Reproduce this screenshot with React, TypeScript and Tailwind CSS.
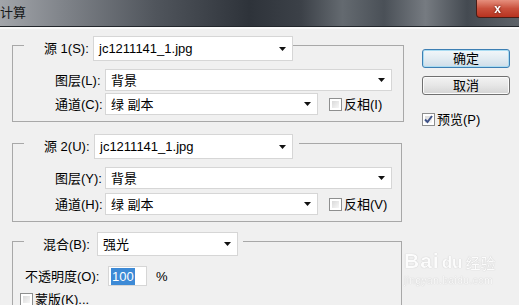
import React from 'react'

function Arrow() {
  return (
    <svg width="7" height="4" viewBox="0 0 7 4" className="shrink-0">
      <path d="M0 0 H7 L3.5 4 Z" fill="#111" />
    </svg>
  )
}

function Combo({ value, width, height = 22 }: { value: string; width: number; height?: number }) {
  return (
    <div
      className="flex items-center justify-between bg-white border border-[#d6d6d6] pl-[5px] pr-[6px] shrink-0"
      style={{ width, height }}
    >
      <span className="leading-none">{value}</span>
      <Arrow />
    </div>
  )
}

function Check({ checked = false }: { checked?: boolean }) {
  return (
    <span className="relative w-[13px] h-[13px] border border-[#8e8f8f] bg-white p-[2px] shrink-0 flex">
      <span className="flex-1 bg-gradient-to-br from-[#d9d9d9] to-[#f7f7f7]" />
      {checked && (
        <svg width="11" height="11" viewBox="0 0 11 11" className="absolute left-[0px] top-[0px]">
          <path d="M2 5.5 L4.5 8 L9 2" stroke="#3e5288" strokeWidth="2" fill="none" />
        </svg>
      )}
    </span>
  )
}

function Row({ label, children }: { label: string; children: React.ReactNode }) {
  return (
    <div className="flex items-center h-[22px]">
      <span className="w-[92px] pl-[42px] leading-none whitespace-nowrap">{label}</span>
      {children}
    </div>
  )
}

export default function App() {
  return (
    <div className="relative w-[519px] h-[305px] overflow-hidden bg-[#f0f0f0] text-[13px] text-black font-['Liberation_Sans','Noto_Sans_CJK_SC',sans-serif]">
      {/* Title bar */}
      <div className="flex justify-between items-start h-[27px] border-b border-[#22262b] bg-[linear-gradient(90deg,#a2a5aa_0%,#80848a_12%,#50555c_30%,#2e333a_48%,#3c4148_58%,#646a70_66%,#4a5057_74%,#767b81_82%,#444a51_90%,#5e6369_100%)]">
        <div className="h-full flex items-center text-[13px] text-[#161819] leading-none pb-[1px]">计算</div>
        <div className="mr-[-4px] w-[47px] h-[18px] rounded-bl-[4px] border border-t-0 border-[#4a1d16] bg-gradient-to-b from-[#e58f7d] via-[#c9503c] to-[#b8321f] flex items-center justify-center">
          <span className="text-white font-bold text-[12px] leading-none pr-[4px] drop-shadow-[0_0_1px_#5a1a10]">x</span>
        </div>
      </div>
      <div className="h-[2px] bg-[#fafafa]" />

      <div className="flex">
        {/* Left column */}
        <div className="ml-[12px] flex flex-col">
          <fieldset className="mt-[1px] w-[392px] border border-[#a8a8a8] px-0 pt-[8px] pb-[6px]">
            <legend className="ml-[11px] p-0">
              <div className="flex items-center pt-[6px]">
                <span className="w-[69px] pl-[20px] leading-none whitespace-nowrap">源 1(S):</span>
                <Combo value="jc1211141_1.jpg" width={200} height={25} />
              </div>
            </legend>
            <div className="flex flex-col gap-[2px]">
              <Row label="图层(L):">
                <Combo value="背景" width={287} />
              </Row>
              <Row label="通道(C):">
                <Combo value="绿 副本" width={213} />
                <span className="ml-[11px]"><Check /></span>
                <span className="ml-[2px] leading-none">反相(I)</span>
              </Row>
            </div>
          </fieldset>

          <fieldset className="mt-[6px] w-[390px] border border-[#a8a8a8] px-0 pt-[8px] pb-[6px]">
            <legend className="ml-[11px] p-0">
              <div className="flex items-center pt-[6px] pr-[6px]">
                <span className="w-[70px] pl-[20px] leading-none whitespace-nowrap">源 2(U):</span>
                <Combo value="jc1211141_1.jpg" width={199} height={25} />
              </div>
            </legend>
            <div className="flex flex-col gap-[4px]">
              <Row label="图层(Y):">
                <Combo value="背景" width={287} />
              </Row>
              <Row label="通道(H):">
                <Combo value="绿 副本" width={213} />
                <span className="ml-[11px]"><Check /></span>
                <span className="ml-[2px] leading-none">反相(V)</span>
              </Row>
            </div>
          </fieldset>

          <fieldset className="mt-[4px] w-[390px] border border-[#a8a8a8] px-0 pt-[10px] pb-[40px]">
            <legend className="ml-[11px] p-0">
              <div className="flex items-center pt-[6px] pr-[5px]">
                <span className="w-[73px] pl-[19px] leading-none whitespace-nowrap">混合(B):</span>
                <Combo value="强光" width={141} height={24} />
              </div>
            </legend>
            <div className="flex items-center h-[20px]">
              <span className="w-[95px] pl-[12px] leading-none whitespace-nowrap">不透明度(O):</span>
              <div className="w-[39px] h-[20px] bg-white border border-[#d6d6d6] flex items-center pl-[2px]">
                <span className="bg-[#3d8ad6] text-white leading-none px-[1px] py-[2px]">100</span>
              </div>
              <span className="ml-[9px] leading-none">%</span>
            </div>
            <div className="flex items-center mt-[6px] pl-[7px] h-[14px]">
              <Check />
              <span className="ml-[2px] leading-none">蒙版(K)...</span>
            </div>
          </fieldset>
        </div>

        {/* Right column */}
        <div className="ml-[18px] w-[88px] pt-[20px] flex flex-col">
          <button className="h-[19px] rounded-[3px] border border-[#3d7fb3] bg-gradient-to-b from-[#f2f7fa] via-[#e2ecf2] to-[#cfdde8] shadow-[inset_0_0_0_1px_#a9dcf2] flex items-center justify-center leading-none">
            确定
          </button>
          <button className="mt-[8px] h-[19px] rounded-[3px] border border-[#707070] bg-gradient-to-b from-[#f3f3f3] via-[#e6e6e6] to-[#d4d4d4] shadow-[inset_0_0_0_1px_#fbfbfb] flex items-center justify-center leading-none">
            取消
          </button>
          <div className="mt-[18px] flex items-center">
            <Check checked />
            <span className="ml-[2px] leading-none">预览(P)</span>
          </div>
        </div>
      </div>

      {/* Watermark */}
      <div className="absolute left-[404px] top-[250px] flex flex-col items-start text-white opacity-80 [text-shadow:0_0_1px_#a0a0a0]">
        <div className="flex items-end leading-none">
          <span className="text-[21px] font-bold tracking-[1px]">Bai</span>
          <span className="text-[17px] font-bold ml-[2px]">du</span>
          <span className="text-[15px] ml-[3px]">经验</span>
        </div>
        <span className="text-[10px] mt-[5px] leading-none tracking-[0.5px]">jingyan.baidu.com</span>
      </div>
    </div>
  )
}
